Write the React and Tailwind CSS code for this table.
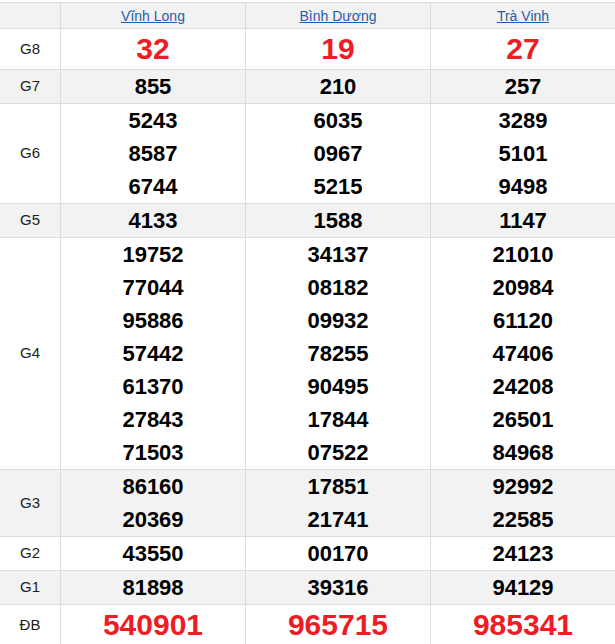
const provinces = ['Vĩnh Long', 'Bình Dương', 'Trà Vinh'];

const rows = [
  { label: 'G8', big: true, values: [['32'], ['19'], ['27']] },
  { label: 'G7', values: [['855'], ['210'], ['257']] },
  { label: 'G6', values: [['5243', '8587', '6744'], ['6035', '0967', '5215'], ['3289', '5101', '9498']] },
  { label: 'G5', values: [['4133'], ['1588'], ['1147']] },
  {
    label: 'G4',
    values: [
      ['19752', '77044', '95886', '57442', '61370', '27843', '71503'],
      ['34137', '08182', '09932', '78255', '90495', '17844', '07522'],
      ['21010', '20984', '61120', '47406', '24208', '26501', '84968'],
    ],
  },
  { label: 'G3', values: [['86160', '20369'], ['17851', '21741'], ['92992', '22585']] },
  { label: 'G2', values: [['43550'], ['00170'], ['24123']] },
  { label: 'G1', values: [['81898'], ['39316'], ['94129']] },
  { label: 'ĐB', big: true, values: [['540901'], ['965715'], ['985341']] },
];

const cols = 'grid grid-cols-[61px_185px_185px_1fr]';

export default function App() {
  return (
    <div className="w-[615px] h-[644px] overflow-hidden bg-white font-['Liberation_Sans',Arial,sans-serif]">
      <div className="mt-[2px] border-t border-[#dddddd]">
        {/* header */}
        <div className={`${cols} h-[26px] bg-[#f2f2f2] border-b border-[#dddddd]`}>
          <div className="border-r border-[#dddddd]"></div>
          {provinces.map((p, i) => (
            <div
              key={p}
              className={`flex items-center justify-center ${i < 2 ? 'border-r border-[#dddddd]' : ''}`}
            >
              <a href="#" className="text-[14px] text-[#1a5fa8] underline leading-none">
                {p}
              </a>
            </div>
          ))}
        </div>

        {rows.map((row, ri) => (
          <div
            key={row.label}
            className={`${cols} border-b border-[#dddddd] ${ri % 2 === 1 ? 'bg-[#f2f2f2]' : 'bg-white'}`}
          >
            <div className="flex items-center justify-center border-r border-[#dddddd] text-[15px] text-[#222]">
              {row.label}
            </div>
            {row.values.map((nums, ci) => (
              <div
                key={ci}
                className={`flex flex-col items-center justify-center ${ci < 2 ? 'border-r border-[#dddddd]' : ''}`}
              >
                {nums.map((n, ni) =>
                  row.big ? (
                    <div key={ni} className="h-[40px] flex items-center text-[30px] font-bold text-[#ee1c25] leading-none">
                      {n}
                    </div>
                  ) : (
                    <div key={ni} className="h-[33px] flex items-center text-[22px] font-bold text-black leading-none">
                      {n}
                    </div>
                  )
                )}
              </div>
            ))}
          </div>
        ))}
      </div>
    </div>
  );
}
